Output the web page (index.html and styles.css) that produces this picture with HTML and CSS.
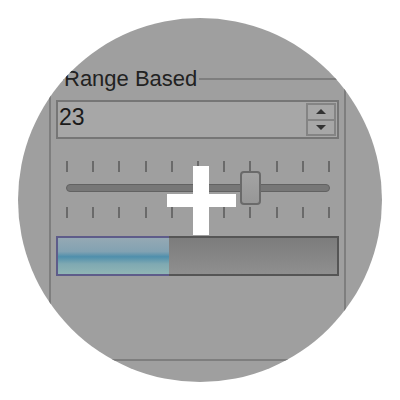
FILE: index.html
```html
<!DOCTYPE html>
<html lang="en">
  <head>
    <meta charset="UTF-8" />
    <meta name="viewport" content="width=device-width, initial-scale=1.0" />
    <title>Range Based</title>
    <link rel="stylesheet" href="styles.css">
  </head>
  <body>
    <div class="lens">
      <fieldset class="group">
        <legend>Range Based</legend>
        <div class="spin">
          <span class="spin-value">23</span>
          <div class="spin-buttons">
            <div class="spin-btn">
              <svg width="10" height="5" viewBox="0 0 10 5"><path d="M0 5 L5 0 L10 5 Z" /></svg>
            </div>
            <div class="spin-btn">
              <svg width="10" height="5" viewBox="0 0 10 5"><path d="M0 0 L10 0 L5 5 Z" /></svg>
            </div>
          </div>
        </div>
        <div class="slider">
          <div class="ticks">
            <span></span><span></span><span></span><span></span><span></span><span></span>
            <span></span><span></span><span></span><span></span><span></span>
          </div>
          <div class="track">
            <div class="thumb" style="left: 70%"></div>
          </div>
          <div class="ticks">
            <span></span><span></span><span></span><span></span><span></span><span></span>
            <span></span><span></span><span></span><span></span><span></span>
          </div>
        </div>
        <div class="progress">
          <div class="progress-fill" style="width: 40%"></div>
          <div class="progress-rest"></div>
        </div>
      </fieldset>
      <svg class="cursor" width="69" height="69" viewBox="0 0 69 69">
        <rect x="26" y="0" width="16" height="69" fill="#fff" />
        <rect x="0" y="28" width="69" height="13" fill="#fff" />
      </svg>
    </div>
  </body>
</html>
```

FILE: styles.css
```css
body {
  margin: 0;
  padding: 18px;
  background: #fff;
  font-family: "Liberation Sans", Arial, sans-serif;
}
.lens {
  position: relative;
  width: 364px;
  height: 364px;
  border-radius: 50%;
  overflow: hidden;
  background: #9f9f9f;
}
.group {
  margin: 48px 0 0 31px;
  width: 297px;
  box-sizing: border-box;
  border: 2px solid #7e7e7e;
  padding: 8px 5px 83px;
}
.group legend {
  margin-left: 8px;
  padding: 0 2px 0 0;
  font-size: 22px;
  line-height: 26px;
  color: #222;
}
.spin {
  display: flex;
  align-items: center;
  height: 39px;
  box-sizing: border-box;
  border: 2px solid #767676;
  background: #a7a7a7;
  padding: 0 1px;
}
.spin-value {
  flex: 1;
  align-self: flex-start;
  font-size: 23px;
  line-height: 30px;
  color: #1a1a1a;
}
.spin-buttons {
  display: flex;
  flex-direction: column;
  width: 30px;
  height: 33px;
  box-sizing: border-box;
  border: 2px solid #848484;
}
.spin-btn {
  flex: 1;
  display: flex;
  align-items: center;
  justify-content: center;
}
.spin-btn:first-child {
  border-bottom: 2px solid #848484;
}
.spin-btn svg {
  fill: #333;
}
.slider {
  margin-top: 22px;
  padding: 0 9px 0 10px;
}
.ticks {
  display: flex;
  justify-content: space-between;
  height: 11px;
}
.ticks span {
  width: 2px;
  background: #6a6a6a;
}
.track {
  position: relative;
  margin: 12px 0 15px;
  height: 8px;
  box-sizing: border-box;
  border: 1px solid #626262;
  border-radius: 4px;
  background: #777;
}
.thumb {
  position: absolute;
  top: -14px;
  width: 21px;
  height: 34px;
  margin-left: -10px;
  box-sizing: border-box;
  border: 2px solid #6a6a6a;
  border-radius: 4px;
  background: linear-gradient(#a3a3a3, #979797);
}
.progress {
  display: flex;
  height: 40px;
  margin-top: 18px;
}
.progress-fill {
  box-sizing: border-box;
  border: 2px solid #5e5c8a;
  border-right: 0;
  background: linear-gradient(#95a9b4, #82a2b2 38%, #4f8fac 52%, #7fa9b2 72%, #90b5b5);
}
.progress-rest {
  flex: 1;
  box-sizing: border-box;
  border: 2px solid #555;
  border-left: 0;
  background: linear-gradient(#7c7c7c, #8f8f8f);
}
.cursor {
  position: absolute;
  left: 149px;
  top: 148px;
}
```
